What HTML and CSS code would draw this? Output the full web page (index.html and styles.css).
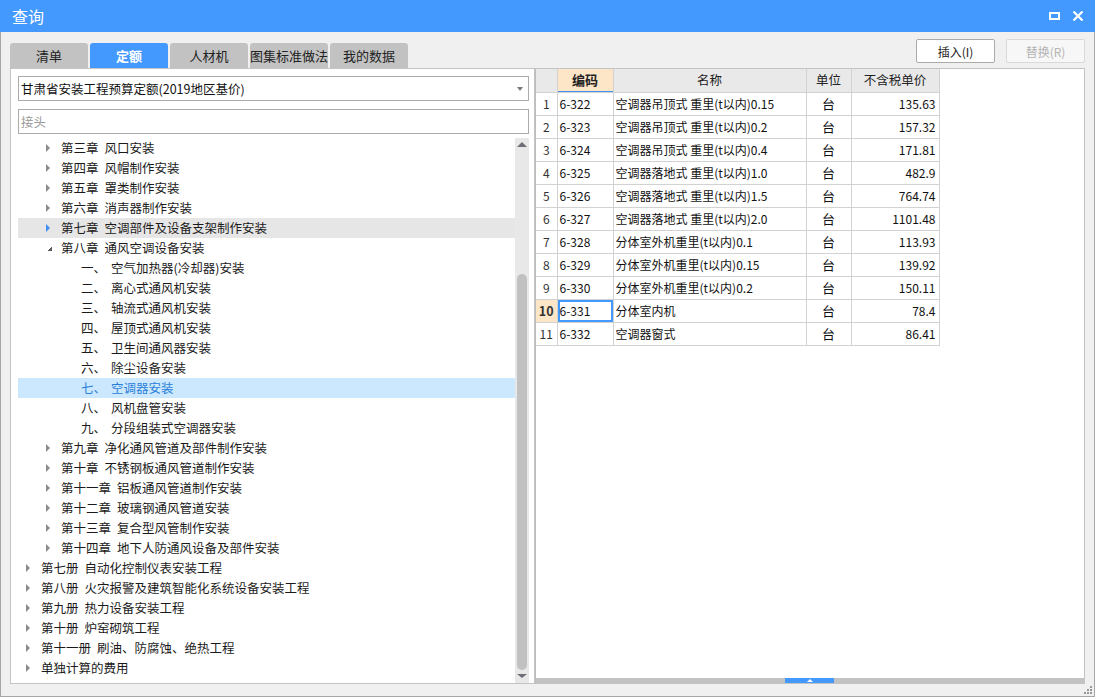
FILE: index.html
```html
<!DOCTYPE html>
<html lang="zh">
<head>
<meta charset="utf-8">
<title>查询</title>
<link rel="stylesheet" href="styles.css">
</head>
<body>
<div class="window">
  <div class="titlebar">
    <span class="title">查询</span>
    <div class="win-btns">
      <svg class="ico-max" width="11" height="8" viewBox="0 0 11 8"><rect x="1" y="1" width="9" height="6" fill="none" stroke="#fff" stroke-width="2"/></svg>
      <svg class="ico-close" width="12" height="10" viewBox="0 0 12 10"><path d="M1.5 0.5 L10.5 9.5 M10.5 0.5 L1.5 9.5" stroke="#fff" stroke-width="2.2"/></svg>
    </div>
  </div>
  <div class="main">
    <div class="toolbar">
      <div class="tabs">
        <div class="tab">清单</div>
        <div class="tab active">定额</div>
        <div class="tab">人材机</div>
        <div class="tab">图集标准做法</div>
        <div class="tab">我的数据</div>
      </div>
      <div class="actions">
        <button class="btn">插入(I)</button>
        <button class="btn disabled">替换(R)</button>
      </div>
    </div>
    <div class="content">
      <div class="left-panel">
        <div class="select">
          <span>甘肃省安装工程预算定额(2019地区基价)</span>
          <span class="caret"></span>
        </div>
        <div class="search">接头</div>
        <div class="tree-wrap">
          <ul class="tree">
            <li class="row l2"><i class="arr"></i><span>第三章</span><span class="t">风口安装</span></li>
            <li class="row l2"><i class="arr"></i><span>第四章</span><span class="t">风帽制作安装</span></li>
            <li class="row l2"><i class="arr"></i><span>第五章</span><span class="t">罩类制作安装</span></li>
            <li class="row l2"><i class="arr"></i><span>第六章</span><span class="t">消声器制作安装</span></li>
            <li class="row l2 hover"><i class="arr blue"></i><span>第七章</span><span class="t">空调部件及设备支架制作安装</span></li>
            <li class="row l2"><i class="arr open"></i><span>第八章</span><span class="t">通风空调设备安装</span></li>
            <li class="row l3"><span class="n">一、</span><span>空气加热器(冷却器)安装</span></li>
            <li class="row l3"><span class="n">二、</span><span>离心式通风机安装</span></li>
            <li class="row l3"><span class="n">三、</span><span>轴流式通风机安装</span></li>
            <li class="row l3"><span class="n">四、</span><span>屋顶式通风机安装</span></li>
            <li class="row l3"><span class="n">五、</span><span>卫生间通风器安装</span></li>
            <li class="row l3"><span class="n">六、</span><span>除尘设备安装</span></li>
            <li class="row l3 selected"><span class="n">七、</span><span>空调器安装</span></li>
            <li class="row l3"><span class="n">八、</span><span>风机盘管安装</span></li>
            <li class="row l3"><span class="n">九、</span><span>分段组装式空调器安装</span></li>
            <li class="row l2"><i class="arr"></i><span>第九章</span><span class="t">净化通风管道及部件制作安装</span></li>
            <li class="row l2"><i class="arr"></i><span>第十章</span><span class="t">不锈钢板通风管道制作安装</span></li>
            <li class="row l2"><i class="arr"></i><span>第十一章</span><span class="t">铝板通风管道制作安装</span></li>
            <li class="row l2"><i class="arr"></i><span>第十二章</span><span class="t">玻璃钢通风管道安装</span></li>
            <li class="row l2"><i class="arr"></i><span>第十三章</span><span class="t">复合型风管制作安装</span></li>
            <li class="row l2"><i class="arr"></i><span>第十四章</span><span class="t">地下人防通风设备及部件安装</span></li>
            <li class="row l1"><i class="arr"></i><span>第七册</span><span class="t">自动化控制仪表安装工程</span></li>
            <li class="row l1"><i class="arr"></i><span>第八册</span><span class="t">火灾报警及建筑智能化系统设备安装工程</span></li>
            <li class="row l1"><i class="arr"></i><span>第九册</span><span class="t">热力设备安装工程</span></li>
            <li class="row l1"><i class="arr"></i><span>第十册</span><span class="t">炉窑砌筑工程</span></li>
            <li class="row l1"><i class="arr"></i><span>第十一册</span><span class="t">刷油、防腐蚀、绝热工程</span></li>
            <li class="row l1"><i class="arr"></i><span>单独计算的费用</span></li>
          </ul>
          <div class="vscroll">
            <span class="up"></span>
            <div class="thumb-track"><div class="thumb"></div></div>
            <span class="down"></span>
          </div>
        </div>
      </div>
      <div class="right-panel">
        <table class="grid">
          <colgroup><col class="c0"><col class="c1"><col class="c2"><col class="c3"><col class="c4"></colgroup>
          <thead>
            <tr><th></th><th class="hl">编码</th><th>名称</th><th>单位</th><th>不含税单价</th></tr>
          </thead>
          <tbody>
            <tr><td class="num">1</td><td>6-322</td><td>空调器吊顶式 重里(t以内)0.15</td><td class="u">台</td><td class="p">135.63</td></tr>
            <tr><td class="num">2</td><td>6-323</td><td>空调器吊顶式 重里(t以内)0.2</td><td class="u">台</td><td class="p">157.32</td></tr>
            <tr><td class="num">3</td><td>6-324</td><td>空调器吊顶式 重里(t以内)0.4</td><td class="u">台</td><td class="p">171.81</td></tr>
            <tr><td class="num">4</td><td>6-325</td><td>空调器落地式 重里(t以内)1.0</td><td class="u">台</td><td class="p">482.9</td></tr>
            <tr><td class="num">5</td><td>6-326</td><td>空调器落地式 重里(t以内)1.5</td><td class="u">台</td><td class="p">764.74</td></tr>
            <tr><td class="num">6</td><td>6-327</td><td>空调器落地式 重里(t以内)2.0</td><td class="u">台</td><td class="p">1101.48</td></tr>
            <tr><td class="num">7</td><td>6-328</td><td>分体室外机重里(t以内)0.1</td><td class="u">台</td><td class="p">113.93</td></tr>
            <tr><td class="num">8</td><td>6-329</td><td>分体室外机重里(t以内)0.15</td><td class="u">台</td><td class="p">139.92</td></tr>
            <tr><td class="num">9</td><td>6-330</td><td>分体室外机重里(t以内)0.2</td><td class="u">台</td><td class="p">150.11</td></tr>
            <tr><td class="num cur">10</td><td class="sel">6-331</td><td>分体室内机</td><td class="u">台</td><td class="p">78.4</td></tr>
            <tr><td class="num">11</td><td>6-332</td><td>空调器窗式</td><td class="u">台</td><td class="p">86.41</td></tr>
          </tbody>
        </table>
        <div class="spacer"></div>
        <div class="hscroll"><div class="hthumb"><span></span></div></div>
      </div>
    </div>
    <div class="statusbar">
      <svg class="grip" width="8" height="8" viewBox="0 0 8 8" fill="#9a9a9a"><rect x="6" y="0" width="2" height="2"/><rect x="3" y="3" width="2" height="2"/><rect x="6" y="3" width="2" height="2"/><rect x="0" y="6" width="2" height="2"/><rect x="3" y="6" width="2" height="2"/><rect x="6" y="6" width="2" height="2"/></svg>
    </div>
  </div>
</div>
</body>
</html>
```
FILE: styles.css
```css
* { box-sizing: border-box; }
html, body { margin: 0; padding: 0; }
body {
  font-family: "Noto Sans CJK SC", "Liberation Sans", sans-serif;
  font-size: 12px;
  color: #1a1a1a;
  background: #f0f0f0;
}
.window {
  width: 1095px;
  height: 697px;
  display: flex;
  flex-direction: column;
  overflow: hidden;
}
.titlebar {
  height: 32px;
  background: #4499fe;
  display: flex;
  align-items: center;
  padding: 0 11px 0 12px;
  color: #fff;
}
.title { font-size: 16px; line-height: 32px; }
.win-btns { margin-left: auto; display: flex; align-items: center; gap: 12px; }
.main {
  flex: 1;
  display: flex;
  flex-direction: column;
  background: #f0f0f0;
  border: 1px solid #a6a6a6;
  border-top: none;
}
.toolbar {
  height: 36px;
  display: flex;
  align-items: flex-end;
  padding: 0 9px 0 9px;
}
.tabs { display: flex; gap: 2px; }
.tab {
  width: 78px;
  height: 25px;
  background: #c2c2c2;
  border-radius: 3px 3px 0 0;
  font-size: 13px;
  line-height: 25px;
  text-align: center;
  color: #222;
}
.tab.active { background: #4499fe; color: #fff; font-weight: bold; }
.actions {
  margin-left: auto;
  align-self: flex-start;
  margin-top: 7px;
  display: flex;
  gap: 11px;
}
.btn {
  width: 79px;
  height: 24px;
  background: #fff;
  border: 1px solid #ababab;
  border-radius: 2px;
  font-family: inherit;
  font-size: 12px;
  color: #222;
  padding: 0;
}
.btn.disabled { border-color: #d9d9d9; color: #b3b3b3; background: #f7f7f7; }
.content {
  height: 616px;
  display: flex;
  margin: 0 8px 0 9px;
}
.left-panel {
  width: 525px;
  background: #fff;
  border: 1px solid #c4c4c4;
  padding: 7px 5px 0 7px;
  display: flex;
  flex-direction: column;
}
.select {
  height: 25px;
  border: 1px solid #ababab;
  display: flex;
  align-items: center;
  padding: 0 5px 0 2px;
  font-size: 12.5px;
  color: #111;
}
.caret {
  margin-left: auto;
  width: 0; height: 0;
  border-left: 3px solid transparent;
  border-right: 3px solid transparent;
  border-top: 4px solid #7a7a7a;
}
.search {
  margin-top: 8px;
  height: 25px;
  border: 1px solid #ababab;
  line-height: 23px;
  padding-left: 2px;
  color: #9a9a9a;
  font-size: 12.5px;
}
.tree-wrap {
  margin-top: 4px;
  flex: 1;
  display: flex;
  min-height: 0;
}
.tree {
  list-style: none;
  margin: 0;
  padding: 0;
  flex: 1;
  overflow: hidden;
}
.row {
  height: 20px;
  display: flex;
  align-items: center;
  white-space: nowrap;
  font-size: 12.5px;
  line-height: 18px;
}
.row .t { margin-left: 6px; }
.row.l1 { padding-left: 8px; }
.row.l2 { padding-left: 28px; }
.row.l3 { padding-left: 63px; }
.row.l3 .n { width: 30px; }
.arr {
  width: 0; height: 0;
  border-top: 4px solid transparent;
  border-bottom: 4px solid transparent;
  border-left: 4px solid #8a8a8a;
  margin-right: 11px;
}
.arr.blue { border-left-color: #3d8ef0; }
.arr.open {
  border: none;
  width: 5px; height: 5px;
  margin-left: 1px;
  margin-right: 9px;
  background: linear-gradient(to bottom right, transparent 50%, #5a5a5a 50%);
}
.row.hover { background: #e6e6e6; }
.row.selected { background: #cce8ff; color: #2a7fd8; }
.vscroll {
  width: 14px;
  background: #e8e8e8;
  display: flex;
  flex-direction: column;
  align-items: center;
}
.vscroll .up, .vscroll .down {
  width: 0; height: 0;
  border-left: 5px solid transparent;
  border-right: 5px solid transparent;
  margin: 4px 0;
}
.vscroll .up { border-bottom: 5px solid #6e6e78; }
.vscroll .down { border-top: 4px solid #6e6e78; margin: 4px 0 5px; }
.thumb-track { flex: 1; width: 100%; display: flex; flex-direction: column; justify-content: flex-end; padding: 0 2px; }
.thumb { height: 396px; background: #c1c1c1; border-radius: 5px; }
.right-panel {
  width: 550px;
  background: #fff;
  border: 1px solid #c4c4c4;
  border-left: 1px solid #bdbdbd;
  display: flex;
  flex-direction: column;
}
.grid {
  border-collapse: collapse;
  table-layout: fixed;
  width: 403px;
  font-size: 12px;
}
.grid col.c0 { width: 21px; }
.grid col.c1 { width: 56px; }
.grid col.c2 { width: 193px; }
.grid col.c3 { width: 45px; }
.grid col.c4 { width: 88px; }
.grid th, .grid td {
  border: 1px solid #d2d2d2;
  padding: 0 2px;
  white-space: nowrap;
  overflow: hidden;
  line-height: 18px;
}
.grid tr:first-child th { border-top: none; }
.grid th:first-child, .grid td:first-child { border-left: none; }
.grid th {
  height: 23px;
  background: #e9e9e9;
  font-weight: normal;
  font-size: 12.5px;
  color: #222;
}
.grid th.hl {
  background: #fde5c8;
  font-weight: bold;
  font-size: 13px;
  box-shadow: inset 0 -1px 0 #3f92ee;
}
.grid td { height: 23px; color: #111; }
.grid td.num { text-align: center; padding: 0; color: #333; }
.grid td.num.cur { background: #fde5c8; font-weight: bold; font-size: 12.5px; }
.grid td.sel { box-shadow: inset 0 0 0 2px #4499fe; }
.grid td.u { text-align: center; font-size: 13px; }
.grid td.p { text-align: right; padding-right: 3px; }
.spacer { flex: 1; }
.hscroll {
  height: 5px;
  background: #c2c2c2;
  display: flex;
  justify-content: flex-start;
}
.hthumb {
  width: 49px;
  margin-left: 249px;
  background: #4499fe;
  display: flex;
  align-items: center;
  justify-content: center;
}
.hthumb span {
  width: 0; height: 0;
  border-left: 3px solid transparent;
  border-right: 3px solid transparent;
  border-bottom: 3px solid #fff;
}
.statusbar {
  flex: 1;
  display: flex;
  justify-content: flex-end;
  align-items: flex-end;
  padding: 0 2px 2px 0;
}
```
